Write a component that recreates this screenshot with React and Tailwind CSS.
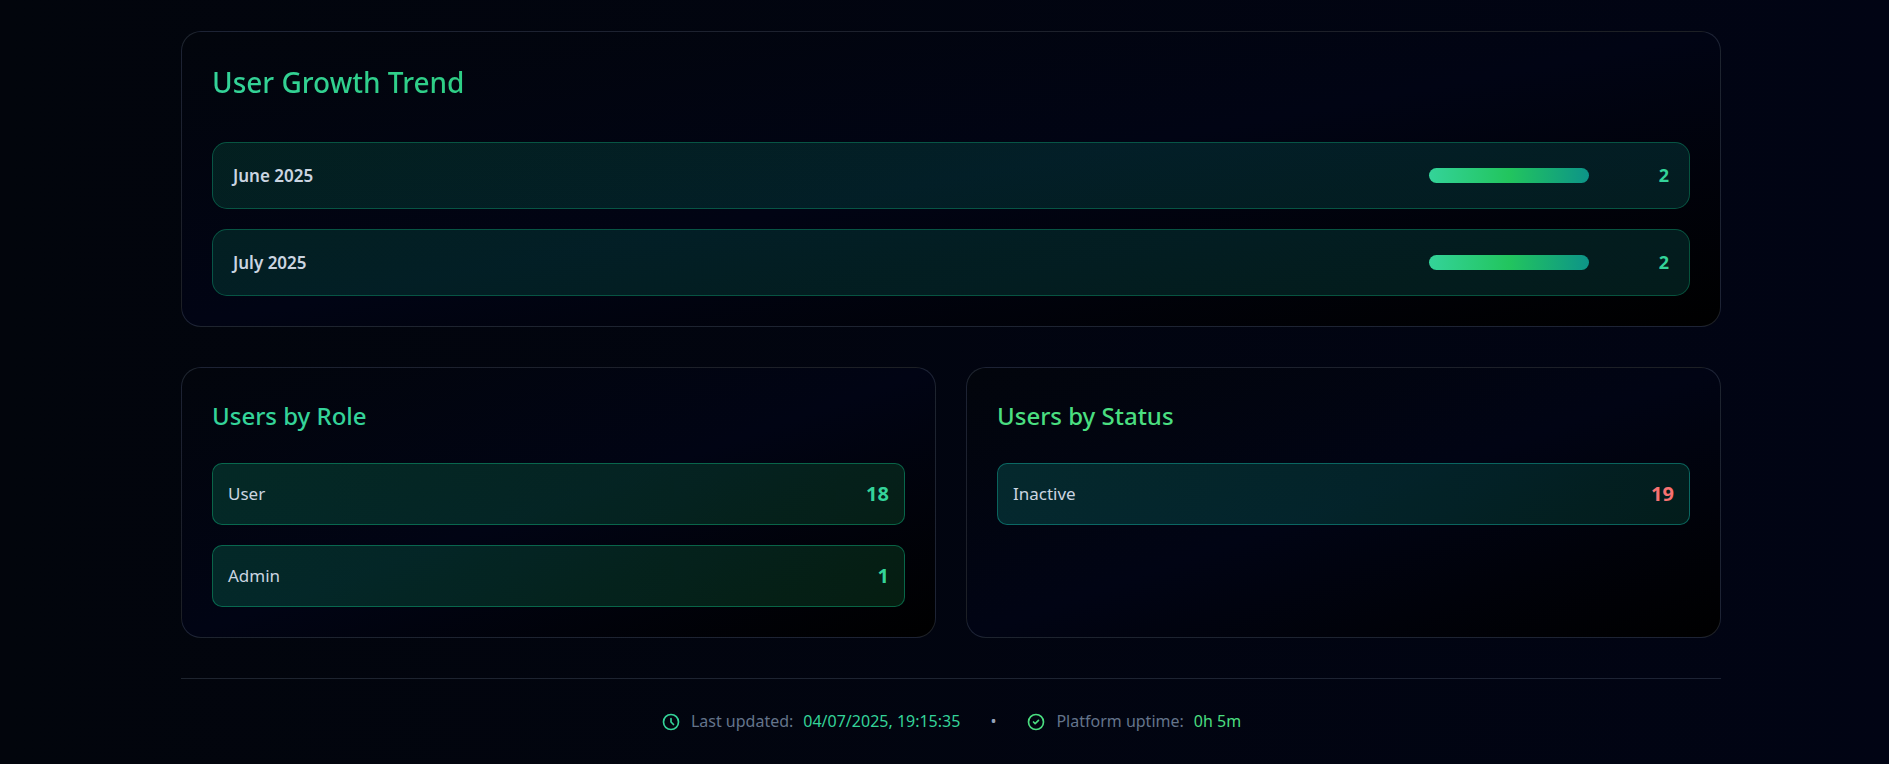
const growth = [
  { month: "June 2025", count: 2 },
  { month: "July 2025", count: 2 },
];

const roles = [
  { label: "User", count: 18 },
  { label: "Admin", count: 1 },
];

const statuses = [{ label: "Inactive", count: 19 }];

function Card({ children }) {
  return (
    <section className="rounded-[20px] border border-slate-400/20 bg-linear-to-br/srgb from-[#02050c] via-[#010414] to-black p-[30px]">
      {children}
    </section>
  );
}

function Icon({ d, className }) {
  return (
    <svg
      className={"size-5 shrink-0 " + className}
      viewBox="0 0 24 24"
      fill="none"
      stroke="currentColor"
      strokeWidth="2"
      strokeLinecap="round"
      strokeLinejoin="round"
      aria-hidden="true"
    >
      <path d={d} />
    </svg>
  );
}

export default function App() {
  return (
    <div className="min-h-screen border-b border-black bg-linear-to-r/srgb from-[#02050c] to-[#010414] pt-[31px] pr-[30px] pl-[43px] font-['Noto_Sans','Open_Sans',sans-serif] text-[#cbd5e1]">
      <main className="mx-auto flex max-w-[1540px] flex-col gap-10">
        <Card>
          <h2 className="mb-10 text-[28px] leading-10 font-medium">
            <span className="block bg-linear-to-r/srgb from-[#34d399] via-[#22c55e] to-[#0d9488] bg-clip-text text-transparent">
              User Growth Trend
            </span>
          </h2>
          <ul className="flex flex-col gap-5">
            {growth.map((g) => (
              <li
                key={g.month}
                className="flex items-center justify-between rounded-[15px] border border-[#10b981]/35 bg-linear-to-r/srgb from-[#10b981]/15 to-[#14b8a6]/15 p-5"
              >
                <span className="text-[17px] leading-[25px] font-semibold">{g.month}</span>
                <span className="flex items-center gap-5">
                  <span className="h-[15px] w-40 rounded-full bg-linear-to-r/srgb from-[#34d399] via-[#22c55e] to-[#0d9488]" />
                  <span className="w-[60px] text-right text-lg leading-[25px] font-bold text-[#34d399]">
                    {g.count}
                  </span>
                </span>
              </li>
            ))}
          </ul>
        </Card>

        <div className="grid grid-cols-2 gap-[30px]">
          <Card>
            <h3 className="mb-[30px] text-2xl leading-[35px] font-medium text-[#34d399]">
              Users by Role
            </h3>
            <ul className="flex flex-col gap-5">
              {roles.map((r) => (
                <li
                  key={r.label}
                  className="flex items-center justify-between rounded-[10px] border border-[#10b981]/45 bg-linear-to-r/srgb from-[#10b981]/20 to-[#22c55e]/15 p-[15px]"
                >
                  <span className="text-[17px] leading-[30px]">{r.label}</span>
                  <span className="text-xl leading-[30px] font-bold text-[#34d399]">{r.count}</span>
                </li>
              ))}
            </ul>
          </Card>
          <Card>
            <h3 className="mb-[30px] text-2xl leading-[35px] font-medium text-[#4ade80]">
              Users by Status
            </h3>
            <ul className="flex flex-col gap-5">
              {statuses.map((s) => (
                <li
                  key={s.label}
                  className="flex items-center justify-between rounded-[10px] border border-[#14b8a6]/45 bg-linear-to-r/srgb from-[#14b8a6]/20 to-[#10b981]/15 p-[15px]"
                >
                  <span className="text-[17px] leading-[30px]">{s.label}</span>
                  <span className="text-xl leading-[30px] font-bold text-[#f87171]">{s.count}</span>
                </li>
              ))}
            </ul>
          </Card>
        </div>

        <footer className="flex items-center justify-center gap-[30px] border-t border-slate-400/20 py-[30px] text-base leading-[25px] text-[#64748b]">
          <p className="flex items-center gap-[10px]">
            <Icon className="text-[#34d399]" d="M12 8v4l3 3m6-3a9 9 0 11-18 0 9 9 0 0118 0z" />
            <span>Last updated:</span>
            <span className="text-[#34d399]">04/07/2025, 19:15:35</span>
          </p>
          <span className="text-[#94a3b8]">•</span>
          <p className="flex items-center gap-[10px]">
            <Icon className="text-[#4ade80]" d="M9 12l2 2 4-4m6 2a9 9 0 11-18 0 9 9 0 0118 0z" />
            <span>Platform uptime:</span>
            <span className="text-[#4ade80]">0h 5m</span>
          </p>
        </footer>
      </main>
    </div>
  );
}
